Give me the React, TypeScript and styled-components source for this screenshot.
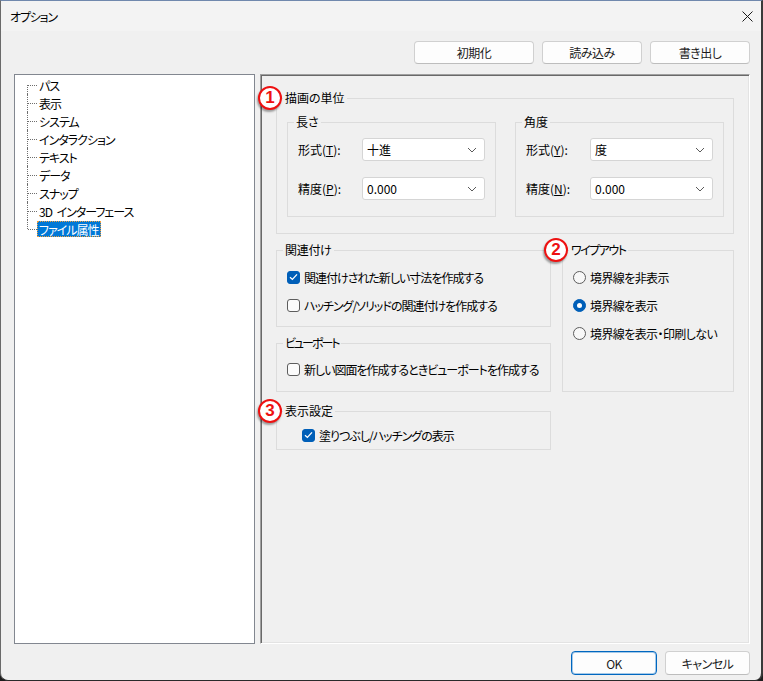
import React from "react";
import styled, { createGlobalStyle } from "styled-components";

const GlobalStyle = createGlobalStyle`
  html, body { margin: 0; padding: 0; background: #1c1c1c; }
  body {
    font-family: "Noto Sans CJK JP", "Noto Sans", sans-serif;
    font-size: 12px;
    font-feature-settings: "palt";
    color: #000;
  }
  * { box-sizing: border-box; }
`;

const Window = styled.div`
  width: 763px;
  height: 681px;
  display: flex;
  flex-direction: column;
  background: #f0f0f0;
  border-top: 1px solid #7088ad;
  border-left: 1px solid #6a6a6a;
  border-right: 2px solid #3a3a3a;
  border-bottom: 1px solid #2a2a2a;
  border-radius: 0 0 8px 8px;
  overflow: hidden;
`;

const TitleBar = styled.div`
  height: 30px;
  flex: none;
  display: flex;
  align-items: center;
  justify-content: space-between;
  padding: 0 8px 0 9px;
  background: #f3f3f3;
  font-size: 12px;
`;

const TitleText = styled.span`
  letter-spacing: -1.2px;
`;

const Body = styled.div`
  flex: 1;
  display: flex;
  flex-direction: column;
  padding: 10px 11px 5px 13px;
  min-height: 0;
`;

const ButtonRow = styled.div<{ $gap: number }>`
  display: flex;
  justify-content: flex-end;
  gap: ${(p) => p.$gap}px;
  flex: none;
`;

const Button = styled.button<{ $w: number; $h: number; $primary?: boolean }>`
  width: ${(p) => p.$w}px;
  height: ${(p) => p.$h}px;
  background: #fdfdfd;
  border: 1px solid ${(p) => (p.$primary ? "#0067c0" : "#d0d0d0")};
  border-bottom-color: ${(p) => (p.$primary ? "#0067c0" : "#bdbdbd")};
  border-radius: 4px;
  box-shadow: ${(p) => (p.$primary ? "inset 0 0 0 1px rgba(0,103,192,0.35)" : "none")};
  font-family: inherit;
  font-size: 12px;
  font-feature-settings: "palt";
  letter-spacing: -0.5px;
  color: #1b1b1b;
  padding: 0;
`;

const Main = styled.div`
  flex: 1;
  display: flex;
  gap: 5px;
  margin: 10px 0 7px;
  min-height: 0;
`;

const Tree = styled.div`
  width: 241px;
  flex: none;
  background: #fff;
  border: 1px solid #828790;
  padding: 1px 0 0 12px;
`;

const TreeRow = styled.div`
  height: 18px;
  display: flex;
  align-items: center;
`;

const Guide = styled.span<{ $first?: boolean; $last?: boolean }>`
  position: relative;
  width: 10px;
  align-self: stretch;
  flex: none;
  &::before {
    content: "";
    position: absolute;
    left: 0;
    top: ${(p) => (p.$first ? "9px" : "0")};
    bottom: ${(p) => (p.$last ? "9px" : "0")};
    border-left: 1px dotted #6e6e6e;
  }
  &::after {
    content: "";
    position: absolute;
    left: 1px;
    right: 0;
    top: 9px;
    border-top: 1px dotted #6e6e6e;
  }
`;

const TreeLabel = styled.span<{ $selected?: boolean }>`
  height: 16px;
  display: flex;
  align-items: center;
  padding: 0 1px;
  border: 1px ${(p) => (p.$selected ? "dotted #f0a040" : "solid transparent")};
  background: ${(p) => (p.$selected ? "#0078d7" : "transparent")};
  color: ${(p) => (p.$selected ? "#fff" : "#000")};
  white-space: pre;
  letter-spacing: -1px;
  word-spacing: 3px;
`;

const Panel = styled.div`
  flex: 1;
  border: 1px solid;
  border-color: #a0a0a0 #ffffff #ffffff #a0a0a0;
  box-shadow: inset 1px 1px 0 #696969, inset -1px -1px 0 #e3e3e3;
  padding: 15px 15px 0 15px;
`;

const Group = styled.fieldset`
  margin: 0;
  min-inline-size: 0;
  border: 1px solid #dcdcdc;
  padding: 0;
`;

const GroupContent = styled.div<{ $pad: string }>`
  padding: ${(p) => p.$pad};
`;

const Legend = styled.legend<{ $ls?: number }>`
  position: relative;
  margin-left: 6px;
  padding: 0 2px;
  line-height: 16px;
  font-size: 12px;
  white-space: nowrap;
  letter-spacing: ${(p) => p.$ls ?? 0}px;
`;

const Badge = styled.span`
  position: absolute;
  left: -25px;
  top: -4px;
  width: 24px;
  height: 24px;
  border-radius: 50%;
  border: 2px solid #ee1111;
  background: #fff;
  color: #ee1111;
  font-family: "Liberation Sans", Arial, sans-serif;
  font-weight: bold;
  font-size: 17px;
  line-height: 20px;
  letter-spacing: 0;
  text-align: center;
  box-shadow: -1px 2px 2px rgba(0, 0, 0, 0.35);
`;

const UnitsGrid = styled.div`
  display: grid;
  grid-template-columns: 1fr 1fr;
  gap: 19px;
`;

const FieldRow = styled.div`
  display: grid;
  grid-template-columns: 64px 1fr;
  align-items: center;
  height: 23px;
  & + & {
    margin-top: 16px;
  }
`;

const FieldLabel = styled.span`
  white-space: nowrap;
`;

const Mnemonic = styled.span`
  text-decoration: underline;
`;

const Select = styled.div`
  height: 23px;
  display: flex;
  align-items: center;
  justify-content: space-between;
  padding: 0 7px 0 4px;
  background: #fff;
  border: 1px solid #d5d5d5;
  border-radius: 3px;
`;

const Row2 = styled.div`
  display: grid;
  grid-template-columns: 275px 1fr;
  gap: 11px;
  margin-top: 8px;
  align-items: start;
`;

const Column = styled.div`
  display: flex;
  flex-direction: column;
`;

const Spaced = styled.div<{ $top: number }>`
  margin-top: ${(p) => p.$top}px;
`;

const OptionRow = styled.div<{ $gap: number; $ls: number }>`
  height: 20px;
  display: flex;
  align-items: center;
  gap: 4px;
  white-space: nowrap;
  letter-spacing: ${(p) => p.$ls}px;
  & + & {
    margin-top: ${(p) => p.$gap}px;
  }
`;

const Box = styled.span<{ $checked?: boolean }>`
  width: 13px;
  height: 13px;
  flex: none;
  border-radius: 3px;
  display: flex;
  align-items: center;
  justify-content: center;
  background: ${(p) => (p.$checked ? "#005fb8" : "#fbfbfb")};
  border: 1px solid ${(p) => (p.$checked ? "#005fb8" : "#5d5d5d")};
`;

const Radio = styled.span<{ $checked?: boolean }>`
  width: 13px;
  height: 13px;
  flex: none;
  border-radius: 50%;
  display: flex;
  align-items: center;
  justify-content: center;
  background: ${(p) => (p.$checked ? "#005fb8" : "#f8f8f8")};
  border: 1px solid ${(p) => (p.$checked ? "#005fb8" : "#5d5d5d")};
  &::after {
    content: "";
    width: 5px;
    height: 5px;
    border-radius: 50%;
    background: ${(p) => (p.$checked ? "#fff" : "transparent")};
  }
`;

const Chevron = () => (
  <svg width="10" height="6" viewBox="0 0 10 6">
    <path d="M1 1 L5 5 L9 1" fill="none" stroke="#5a5a5a" strokeWidth="1" />
  </svg>
);

const Check = () => (
  <svg width="9" height="8" viewBox="0 0 9 8">
    <path d="M1 4.2 L3.4 6.4 L8 1.4" fill="none" stroke="#fff" strokeWidth="1.3" />
  </svg>
);

const CloseIcon = () => (
  <svg width="11" height="11" viewBox="0 0 11 11">
    <path d="M0.5 0.5 L10.5 10.5 M10.5 0.5 L0.5 10.5" stroke="#1a1a1a" strokeWidth="1" />
  </svg>
);

const treeItems = [
  "パス",
  "表示",
  "システム",
  "インタラクション",
  "テキスト",
  "データ",
  "スナップ",
  "3D インターフェース",
  "ファイル属性",
];

const Field = ({ label, m, value }: { label: string; m: string; value: string }) => (
  <FieldRow>
    <FieldLabel>
      {label}(<Mnemonic>{m}</Mnemonic>):
    </FieldLabel>
    <Select>
      <span>{value}</span>
      <Chevron />
    </Select>
  </FieldRow>
);

const CheckOption = ({ checked, text, gap }: { checked?: boolean; text: string; gap: number }) => (
  <OptionRow $gap={gap} $ls={-1}>
    <Box $checked={checked}>{checked && <Check />}</Box>
    <span>{text}</span>
  </OptionRow>
);

const RadioOption = ({ checked, text }: { checked?: boolean; text: string }) => (
  <OptionRow $gap={8} $ls={-0.6}>
    <Radio $checked={checked} />
    <span>{text}</span>
  </OptionRow>
);

export default function App() {
  return (
    <>
      <GlobalStyle />
      <Window>
        <TitleBar>
          <TitleText>オプション</TitleText>
          <CloseIcon />
        </TitleBar>
        <Body>
          <ButtonRow $gap={8}>
            <Button $w={120} $h={23}>初期化</Button>
            <Button $w={100} $h={23}>読み込み</Button>
            <Button $w={100} $h={23}>書き出し</Button>
          </ButtonRow>
          <Main>
            <Tree>
              {treeItems.map((t, i) => (
                <TreeRow key={t}>
                  <Guide $first={i === 0} $last={i === treeItems.length - 1} />
                  <TreeLabel $selected={i === treeItems.length - 1}>{t}</TreeLabel>
                </TreeRow>
              ))}
            </Tree>
            <Panel>
              <Group>
                <Legend>
                  <Badge>1</Badge>
                  描画の単位
                </Legend>
                <GroupContent $pad="8px 9px 16px 10px">
                  <UnitsGrid>
                    <Group>
                      <Legend>長さ</Legend>
                      <GroupContent $pad="8px 10px 16px 10px">
                        <Field label="形式" m="T" value="十進" />
                        <Field label="精度" m="P" value="0.000" />
                      </GroupContent>
                    </Group>
                    <Group>
                      <Legend>角度</Legend>
                      <GroupContent $pad="8px 10px 16px 10px">
                        <Field label="形式" m="Y" value="度" />
                        <Field label="精度" m="N" value="0.000" />
                      </GroupContent>
                    </Group>
                  </UnitsGrid>
                </GroupContent>
              </Group>
              <Row2>
                <Column>
                  <Group>
                    <Legend $ls={-0.3}>関連付け</Legend>
                    <GroupContent $pad="9px 10px 11px 10px">
                      <CheckOption checked gap={6} text="関連付けされた新しい寸法を作成する" />
                      <CheckOption gap={6} text="ハッチング/ソリッドの関連付けを作成する" />
                    </GroupContent>
                  </Group>
                  <Spaced $top={8}>
                    <Group>
                      <Legend $ls={-2}>ビューポート</Legend>
                      <GroupContent $pad="8px 10px 12px 10px">
                        <CheckOption gap={7} text="新しい図面を作成するときビューポートを作成する" />
                      </GroupContent>
                    </Group>
                  </Spaced>
                  <Spaced $top={11}>
                    <Group>
                      <Legend>
                        <Badge>3</Badge>
                        表示設定
                      </Legend>
                      <GroupContent $pad="6px 10px 4px 25px">
                        <CheckOption checked gap={7} text="塗りつぶし/ハッチングの表示" />
                      </GroupContent>
                    </Group>
                  </Spaced>
                </Column>
                <Group>
                  <Legend $ls={-1.5}>
                    <Badge>2</Badge>
                    ワイプアウト
                  </Legend>
                  <GroupContent $pad="9px 10px 48px 10px">
                    <RadioOption text="境界線を非表示" />
                    <RadioOption checked text="境界線を表示" />
                    <RadioOption text="境界線を表示・印刷しない" />
                  </GroupContent>
                </Group>
              </Row2>
            </Panel>
          </Main>
          <ButtonRow $gap={8}>
            <Button $w={86} $h={24} $primary>OK</Button>
            <Button $w={85} $h={24}>キャンセル</Button>
          </ButtonRow>
        </Body>
      </Window>
    </>
  );
}
